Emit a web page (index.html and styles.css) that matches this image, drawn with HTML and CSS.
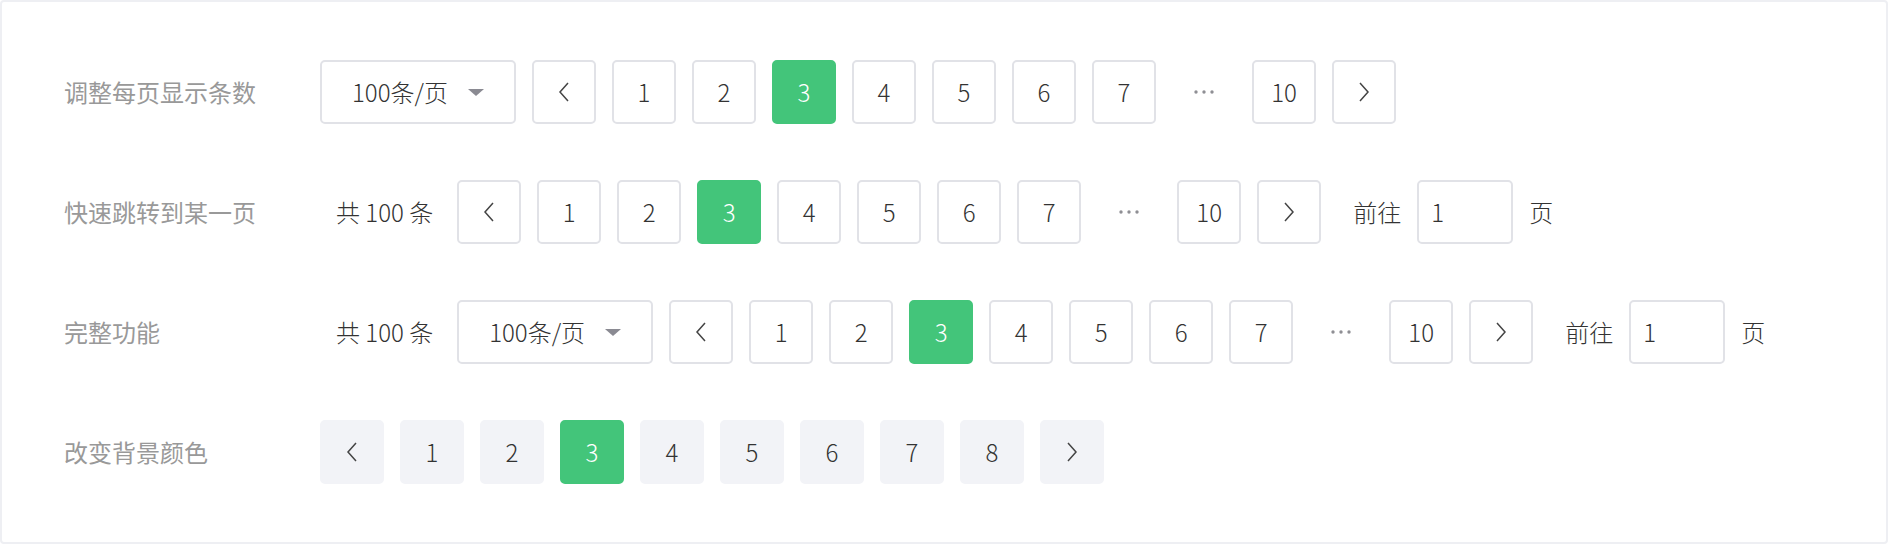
FILE: index.html
```html
<!DOCTYPE html>
<html lang="zh-CN">
<head>
<meta charset="utf-8">
<title>Pagination</title>
<link rel="stylesheet" href="styles.css">
</head>
<body>
<div class="card">
  <div class="row">
    <div class="label">调整每页显示条数</div>
    <div class="pager">
      <div class="select"><span>100条/页</span><i class="caret"></i></div>
      <div class="pg"><svg class="chev" viewBox="0 0 12 22"><polyline points="10,2 2,11 10,20"/></svg></div>
      <div class="pg">1</div>
      <div class="pg">2</div>
      <div class="pg active">3</div>
      <div class="pg">4</div>
      <div class="pg">5</div>
      <div class="pg">6</div>
      <div class="pg">7</div>
      <div class="pg dots"><svg viewBox="0 0 20 4"><circle cx="2" cy="2" r="1.7"/><circle cx="10" cy="2" r="1.7"/><circle cx="18" cy="2" r="1.7"/></svg></div>
      <div class="pg">10</div>
      <div class="pg"><svg class="chev" viewBox="0 0 12 22"><polyline points="2,2 10,11 2,20"/></svg></div>
    </div>
  </div>

  <div class="row">
    <div class="label">快速跳转到某一页</div>
    <div class="pager">
      <div class="total">共 100 条</div>
      <div class="pg"><svg class="chev" viewBox="0 0 12 22"><polyline points="10,2 2,11 10,20"/></svg></div>
      <div class="pg">1</div>
      <div class="pg">2</div>
      <div class="pg active">3</div>
      <div class="pg">4</div>
      <div class="pg">5</div>
      <div class="pg">6</div>
      <div class="pg">7</div>
      <div class="pg dots"><svg viewBox="0 0 20 4"><circle cx="2" cy="2" r="1.7"/><circle cx="10" cy="2" r="1.7"/><circle cx="18" cy="2" r="1.7"/></svg></div>
      <div class="pg">10</div>
      <div class="pg"><svg class="chev" viewBox="0 0 12 22"><polyline points="2,2 10,11 2,20"/></svg></div>
      <div class="jump"><span>前往</span><div class="input">1</div><span>页</span></div>
    </div>
  </div>

  <div class="row">
    <div class="label">完整功能</div>
    <div class="pager">
      <div class="total">共 100 条</div>
      <div class="select"><span>100条/页</span><i class="caret"></i></div>
      <div class="pg"><svg class="chev" viewBox="0 0 12 22"><polyline points="10,2 2,11 10,20"/></svg></div>
      <div class="pg">1</div>
      <div class="pg">2</div>
      <div class="pg active">3</div>
      <div class="pg">4</div>
      <div class="pg">5</div>
      <div class="pg">6</div>
      <div class="pg">7</div>
      <div class="pg dots"><svg viewBox="0 0 20 4"><circle cx="2" cy="2" r="1.7"/><circle cx="10" cy="2" r="1.7"/><circle cx="18" cy="2" r="1.7"/></svg></div>
      <div class="pg">10</div>
      <div class="pg"><svg class="chev" viewBox="0 0 12 22"><polyline points="2,2 10,11 2,20"/></svg></div>
      <div class="jump"><span>前往</span><div class="input">1</div><span>页</span></div>
    </div>
  </div>

  <div class="row">
    <div class="label">改变背景颜色</div>
    <div class="pager filled">
      <div class="pg"><svg class="chev" viewBox="0 0 12 22"><polyline points="10,2 2,11 10,20"/></svg></div>
      <div class="pg">1</div>
      <div class="pg">2</div>
      <div class="pg active">3</div>
      <div class="pg">4</div>
      <div class="pg">5</div>
      <div class="pg">6</div>
      <div class="pg">7</div>
      <div class="pg">8</div>
      <div class="pg"><svg class="chev" viewBox="0 0 12 22"><polyline points="2,2 10,11 2,20"/></svg></div>
    </div>
  </div>
</div>
</body>
</html>
```

FILE: styles.css
```css
* { box-sizing: border-box; }
html, body { margin: 0; padding: 0; background: #ffffff; }
body {
  width: 1888px;
  height: 544px;
  font-family: "Noto Sans CJK SC", "Noto Sans", sans-serif;
  font-size: 24px;
  color: #333333;
}
.card {
  width: 1888px;
  height: 544px;
  border: 2px solid #eeeff3;
  border-radius: 4px;
  padding: 58px 62px;
  display: flex;
  flex-direction: column;
  gap: 56px;
}
.row {
  display: flex;
  align-items: center;
  height: 64px;
}
.label {
  width: 256px;
  flex: none;
  color: #999999;
  line-height: 1;
}
.pager {
  display: flex;
  align-items: center;
  gap: 16px;
}
.pg {
  width: 64px;
  height: 64px;
  border: 2px solid #e1e2e7;
  border-radius: 5px;
  display: flex;
  align-items: center;
  justify-content: center;
  color: #333333;
  font-weight: 300;
  line-height: 1;
  background: #ffffff;
}
.pg.active {
  background: #43c57a;
  border-color: #43c57a;
  color: #ffffff;
}
.pg.dots {
  border-color: transparent;
  background: transparent;
}
.pg.dots svg {
  width: 20px;
  height: 4px;
  fill: #8f8f94;
}
.chev {
  width: 12px;
  height: 22px;
  fill: none;
  stroke: #444444;
  stroke-width: 1.5;
  stroke-linejoin: miter;
}
.filled .pg {
  background: #f2f3f7;
  border-color: #f2f3f7;
}
.filled .pg.active {
  background: #43c57a;
  border-color: #43c57a;
}
.select {
  width: 196px;
  height: 64px;
  border: 2px solid #e1e2e7;
  border-radius: 5px;
  display: flex;
  align-items: center;
  justify-content: space-between;
  padding: 0 30px;
  font-weight: 300;
  line-height: 1;
}
.caret {
  width: 0;
  height: 0;
  border-left: 8px solid transparent;
  border-right: 8px solid transparent;
  border-top: 7px solid #8a8a92;
}
.total {
  margin-left: 16px;
  margin-right: 8px;
  line-height: 1;
  font-weight: 300;
}
.jump {
  display: flex;
  align-items: center;
  gap: 16px;
  margin-left: 16px;
  line-height: 1;
  font-weight: 300;
}
.input {
  width: 96px;
  height: 64px;
  border: 2px solid #e1e2e7;
  border-radius: 5px;
  display: flex;
  align-items: center;
  padding-left: 12px;
}
```
